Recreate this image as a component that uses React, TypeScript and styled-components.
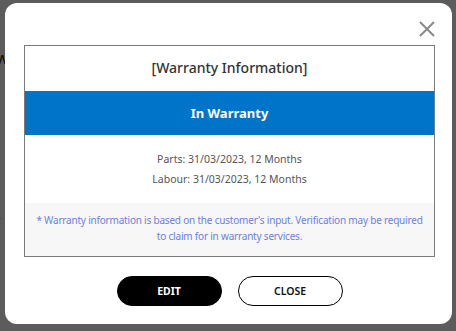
import styled, { createGlobalStyle } from "styled-components";

const GlobalStyle = createGlobalStyle`
    html, body {
        margin: 0;
        padding: 0;
        width: 456px;
        height: 331px;
        overflow: hidden;
        font-family: "Noto Sans", "Open Sans", sans-serif;
    }
`;

const Page = styled.div`
    position: relative;
    width: 456px;
    height: 331px;
    background: #ffffff;
    color: #222;
    font-size: 16px;
`;

const PageText = styled.div`
    padding: 50px 0 0 0;
    line-height: 1;
    & > p {
        margin: 0 0 150px -4px;
    }
`;

const Overlay = styled.div`
    position: absolute;
    inset: 0;
    background: rgba(0, 0, 0, 0.64);
    display: flex;
    align-items: flex-start;
    padding: 3px 4px 0 5px;
`;

const Modal = styled.div`
    position: relative;
    width: 447px;
    height: 321px;
    box-sizing: border-box;
    background: #ffffff;
    border-radius: 12px;
    padding: 42px 17px 17px 19px;
    display: flex;
    flex-direction: column;
`;

const CloseIcon = styled.button`
    position: absolute;
    top: 16px;
    right: 15px;
    width: 20px;
    height: 20px;
    border: 0;
    padding: 0;
    background: none;
    cursor: pointer;
    display: flex;
    align-items: center;
    justify-content: center;
`;

const InfoBox = styled.div`
    border: 1px solid #7a7a7a;
    display: flex;
    flex-direction: column;
`;

const BoxTitle = styled.div`
    height: 45px;
    padding-bottom: 3px;
    box-sizing: border-box;
    display: flex;
    align-items: center;
    justify-content: center;
    font-size: 14px;
    font-weight: 500;
    color: #333;
`;

const StatusBand = styled.div<{ $color: string }>`
    height: 44px;
    background: ${({ $color }) => $color};
    color: #fff;
    display: flex;
    align-items: center;
    justify-content: center;
    font-size: 13px;
    font-weight: 700;
`;

const Details = styled.div`
    padding: 14px 0 14px;
    display: flex;
    flex-direction: column;
    align-items: center;
    font-size: 10.5px;
    line-height: 20px;
    color: #555;
`;

const Note = styled.div`
    background: #f7f7f7;
    padding: 9px 10px 12px;
    text-align: center;
    font-size: 10px;
    letter-spacing: -0.2px;
    line-height: 16px;
    color: #6c82dc;
`;

const Actions = styled.div`
    margin-top: 19px;
    display: flex;
    justify-content: center;
    gap: 16px;
`;

const ActionButton = styled.button<{ $primary?: boolean }>`
    width: 105px;
    height: 30px;
    box-sizing: border-box;
    border-radius: 15px;
    border: 1.2px solid #000;
    background: ${({ $primary }) => ($primary ? "#000" : "#fff")};
    color: ${({ $primary }) => ($primary ? "#fff" : "#111")};
    font-family: "Noto Sans", sans-serif;
    font-size: 10.5px;
    font-weight: ${({ $primary }) => ($primary ? 700 : 600)};
    cursor: pointer;
`;

const warranty = {
  parts: "31/03/2023, 12 Months",
  labour: "31/03/2023, 12 Months",
};

export default function App() {
  return (
    <>
      <GlobalStyle />
      <Page>
        <PageText>
          <p>w</p>
          <p>(</p>
        </PageText>
        <Overlay>
          <Modal>
            <CloseIcon aria-label="close">
              <svg width="16" height="16" viewBox="0 0 16 16">
                <path d="M1 1 L15 15 M15 1 L1 15" stroke="#8a8a8a" strokeWidth="2" fill="none" />
              </svg>
            </CloseIcon>
            <InfoBox>
              <BoxTitle>[Warranty Information]</BoxTitle>
              <StatusBand $color="#0074c8">In Warranty</StatusBand>
              <Details>
                <span>Parts: {warranty.parts}</span>
                <span>Labour: {warranty.labour}</span>
              </Details>
              <Note>
                * Warranty information is based on the customer's input. Verification may be required
                to claim for in warranty services.
              </Note>
            </InfoBox>
            <Actions>
              <ActionButton $primary>EDIT</ActionButton>
              <ActionButton>CLOSE</ActionButton>
            </Actions>
          </Modal>
        </Overlay>
      </Page>
    </>
  );
}
